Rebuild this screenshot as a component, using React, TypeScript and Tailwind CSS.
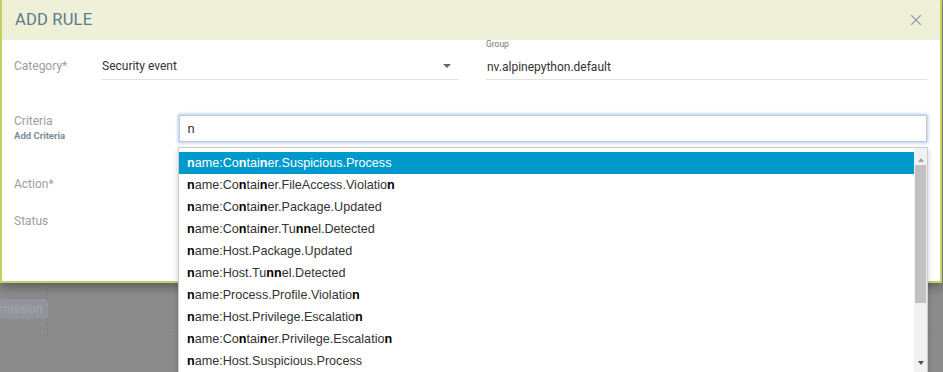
import { X } from "lucide-react";

const options = [
  "name:Container.Suspicious.Process",
  "name:Container.FileAccess.Violation",
  "name:Container.Package.Updated",
  "name:Container.Tunnel.Detected",
  "name:Host.Package.Updated",
  "name:Host.Tunnel.Detected",
  "name:Process.Profile.Violation",
  "name:Host.Privilege.Escalation",
  "name:Container.Privilege.Escalation",
  "name:Host.Suspicious.Process",
];

// bold every match of the typed letter
const Highlight = ({ text, active }: { text: string; active: boolean }) => {
  const parts = text.split("n");
  return (
    <>
      {parts.map((part, i) => (
        <span key={i}>
          {part}
          {i < parts.length - 1 && (
            <b className={active ? "font-bold text-white" : "font-bold text-black"}>n</b>
          )}
        </span>
      ))}
    </>
  );
};

const App = () => {
  return (
    <div className="relative h-[372px] w-[943px] overflow-hidden bg-[#8b8b8b] font-['Roboto',sans-serif]">
      {/* dialog */}
      <div className="relative z-10 h-[283px] w-[942px] border-x-2 border-b-2 border-[#c6d162] bg-white shadow-[0_4px_10px_rgba(0,0,0,0.35)]">
        <div className="flex h-[40px] items-center justify-between bg-[#eef0d7] pl-[13px] pr-[15px]">
          <h2 className="text-[16.5px] tracking-[0.2px] text-[#5d7c8a]">ADD RULE</h2>
          <X className="h-[18px] w-[18px] text-[#8a9fa9]" strokeWidth={1.5} />
        </div>

        <div className="pl-[12px] pr-[13px]">
          {/* category + group */}
          <div className="flex items-end">
            <div className="flex w-[473px] items-start">
              <span className="w-[87px] text-[12px] leading-[20px] text-[#9e9e9e]">Category*</span>
              <div className="flex w-[358px] items-center justify-between border-b border-[#e2e2e2] pb-[3px] pl-[1px] pr-[8px]">
                <span className="text-[12px] leading-[20px] text-[#333]">Security event</span>
                <span className="h-0 w-0 border-x-[4px] border-t-[4px] border-x-transparent border-t-[#666]" />
              </div>
            </div>
            <div className="flex w-[442px] flex-col">
              <div className="text-[8.5px] leading-[9px] text-[#777]">Group</div>
              <div className="mt-[8px] border-b border-[#e2e2e2] pb-[2px] pl-[1px] text-[12px] leading-[20px] text-[#333]">
                nv.alpinepython.default
              </div>
            </div>
          </div>

          {/* criteria */}
          <div className="mt-[31px] flex items-start">
            <div className="flex w-[166px] flex-col pt-[2px]">
              <span className="text-[12px] leading-[16px] text-[#9e9e9e]">Criteria</span>
              <span className="text-[9.5px] font-bold leading-[13px] text-[#7b8d98]">Add Criteria</span>
            </div>
            <div className="relative mt-[4px] w-[750px]">
              <div className="flex h-[27px] items-center border border-[#c9c9c9] px-[7px] shadow-[0_0_3px_1px_rgba(110,170,235,0.6)]">
                <span className="text-[13px] text-[#333]">n</span>
              </div>
            </div>
          </div>

          <div className="mt-[34px] text-[12px] leading-[16px] text-[#9e9e9e]">Action*</div>
          <div className="mt-[21px] text-[12px] leading-[16px] text-[#9e9e9e]">Status</div>
        </div>
      </div>

      {/* page behind the backdrop */}
      <div className="flex h-[52px]">
        <div className="flex w-[48px] items-center border-r border-dashed border-[#808080]">
          <span className="rounded-r-[3px] bg-[#8f959a] py-[1px] pr-[6px] text-[12px] text-[#a0a7ad]">
            mission
          </span>
        </div>
      </div>
      <div className="border-t border-[#868686]" />

      {/* autocomplete menu */}
      <div className="absolute left-[178px] top-[147px] z-20 flex h-[240px] w-[750px] border border-[#cccccc] bg-white pt-[4px] font-['Liberation_Sans',Arial,sans-serif] shadow-[0_3px_6px_rgba(0,0,0,0.2)]">
        <ul className="flex-1">
          {options.map((opt, i) => (
            <li
              key={opt}
              className={
                i === 0
                  ? "flex h-[22px] items-center bg-[#0099cc] pl-[8px] text-[12.6px] text-white"
                  : "flex h-[22px] items-center pl-[8px] text-[12.6px] text-[#333]"
              }
            >
              <Highlight text={opt} active={i === 0} />
            </li>
          ))}
        </ul>
        <div className="-mt-[4px] flex w-[13px] flex-col items-center bg-[#f1f1f1]">
          <span className="mt-[10px] h-0 w-0 border-x-[3.5px] border-b-[4px] border-x-transparent border-b-[#a3a3a3]" />
          <div className="mt-[3px] h-[138px] w-[11px] bg-[#c1c1c1]" />
          <div className="flex-1" />
          <span className="mb-[21px] h-0 w-0 border-x-[3.5px] border-t-[4px] border-x-transparent border-t-[#505050]" />
        </div>
      </div>
    </div>
  );
};

export default App;
